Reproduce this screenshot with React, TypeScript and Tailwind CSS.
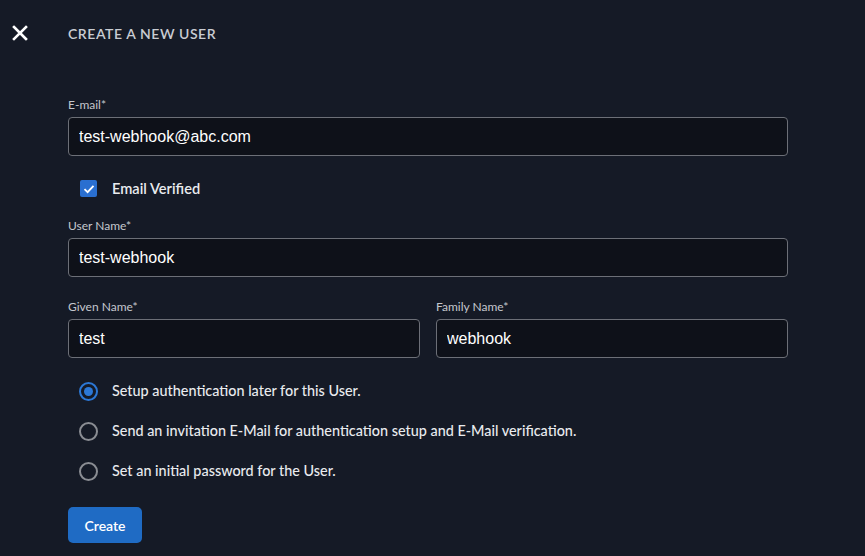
const labelCls = "block text-[12px] leading-[14px] text-[#c4c7cd] mb-[5px]";
const inputCls =
  "w-full h-[39px] rounded-[4px] border border-[#6c6f77] bg-[#0e1119] px-[10px] text-[16px] text-white font-['Liberation_Sans',Arial,sans-serif] outline-none";

const Field = ({ label, value }: { label: string; value: string }) => (
  <div>
    <label className={labelCls}>{label}</label>
    <input className={inputCls} defaultValue={value} />
  </div>
);

const Radio = ({ checked, text }: { checked?: boolean; text: string }) => (
  <div className="flex items-center h-[20px]">
    <div className="w-[44px] flex justify-start pl-[11px]">
      {checked ? (
        <span className="w-[19px] h-[19px] rounded-full border-2 border-[#2c78d6] flex items-center justify-center">
          <span className="w-[9px] h-[9px] rounded-full bg-[#2c78d6]" />
        </span>
      ) : (
        <span className="w-[19px] h-[19px] rounded-full border-2 border-[#8a8d93]" />
      )}
    </div>
    <span className="text-[14.4px] text-[#e9ebee] font-medium">{text}</span>
  </div>
);

export default function App() {
  return (
    <div className="w-[865px] h-[556px] bg-[#151a26] font-['Lato','Noto_Sans',sans-serif] overflow-hidden">
      <div className="flex items-center h-[64px]">
        <div className="w-[68px] pl-[12px] pt-[1px]">
          <svg width="16" height="16" viewBox="0 0 16 16">
            <path d="M2 2 L14 14 M14 2 L2 14" stroke="#ffffff" strokeWidth="2.6" strokeLinecap="square" />
          </svg>
        </div>
        <h1 className="text-[14px] font-semibold tracking-[0.04em] text-[#c9ccd2] pt-[2px]">CREATE A NEW USER</h1>
      </div>

      <div className="pl-[68px] w-[788px] pt-[34px]">
        <Field label="E-mail*" value="test-webhook@abc.com" />

        <div className="flex items-center mt-[24px] h-[17px]">
          <div className="w-[44px] pl-[12px]">
            <span className="w-[17px] h-[17px] rounded-[2px] bg-[#2a6fd0] flex items-center justify-center">
              <svg width="12" height="10" viewBox="0 0 12 10">
                <path d="M1.5 5.2 L4.6 8.2 L10.5 1.8" stroke="#ffffff" strokeWidth="1.8" fill="none" />
              </svg>
            </span>
          </div>
          <span className="text-[14.6px] font-semibold text-[#e9ebee]">Email Verified</span>
        </div>

        <div className="mt-[22px]">
          <Field label="User Name*" value="test-webhook" />
        </div>

        <div className="grid grid-cols-2 gap-[16px] mt-[23px]">
          <Field label="Given Name*" value="test" />
          <Field label="Family Name*" value="webhook" />
        </div>

        <div className="flex flex-col gap-[20px] mt-[23px]">
          <Radio checked text="Setup authentication later for this User." />
          <Radio text="Send an invitation E-Mail for authentication setup and E-Mail verification." />
          <Radio text="Set an initial password for the User." />
        </div>

        <button className="mt-[26px] w-[74px] h-[36px] rounded-[5px] bg-[#1f6bc4] text-white text-[14px] font-semibold">
          Create
        </button>
      </div>
    </div>
  );
}
